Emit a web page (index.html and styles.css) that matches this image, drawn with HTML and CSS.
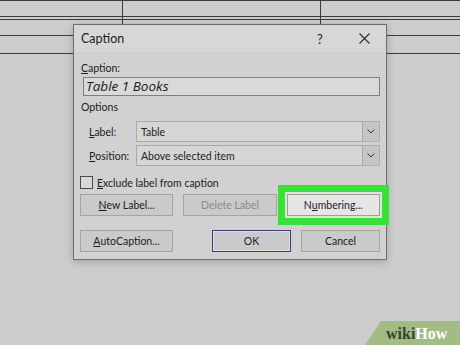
FILE: index.html
```html
<!DOCTYPE html>
<html lang="en">
<head>
  <meta charset="UTF-8">
  <meta name="viewport" content="width=device-width, initial-scale=1">
  <title>Caption</title>
  <link rel="stylesheet" href="styles.css">
</head>
<body>

<div class="page">
  <div class="sheet">
    <div class="trow r1"><div class="cell"></div><div class="cell"></div><div class="cell"></div></div>
    <div class="trow r2"><div class="cell"></div><div class="cell"></div><div class="cell"></div></div>
    <div class="trow r3"><div class="cell"></div><div class="cell"></div><div class="cell"></div></div>
    <div class="trow r4"><div class="cell"></div><div class="cell"></div><div class="cell"></div></div>
  </div>

  <div class="dialog">
    <div class="titlebar">
      <span class="title">Caption</span>
      <span class="help">?</span>
      <span class="close">
        <svg width="11" height="11" viewBox="0 0 11 11"><path d="M0.5 0.5 L10.5 10.5 M10.5 0.5 L0.5 10.5" stroke="#2b2b2b" stroke-width="1.1" fill="none"/></svg>
      </span>
    </div>

    <div class="body">
      <div class="field-label"><u>C</u>aption:</div>
      <div class="caption-input">Table 1 Books</div>

      <div class="group-label">Options</div>

      <div class="opt-row first">
        <span class="opt-label"><u>L</u>abel:</span>
        <div class="select">
          <span class="select-value">Table</span>
          <span class="select-arrow"><svg width="8" height="5" viewBox="0 0 8 5"><path d="M0.5 0.5 L4 4 L7.5 0.5" stroke="#333" stroke-width="1" fill="none"/></svg></span>
        </div>
      </div>
      <div class="opt-row">
        <span class="opt-label"><u>P</u>osition:</span>
        <div class="select">
          <span class="select-value">Above selected item</span>
          <span class="select-arrow"><svg width="8" height="5" viewBox="0 0 8 5"><path d="M0.5 0.5 L4 4 L7.5 0.5" stroke="#333" stroke-width="1" fill="none"/></svg></span>
        </div>
      </div>

      <div class="check-row">
        <span class="check"></span>
        <span><u>E</u>xclude label from caption</span>
      </div>

      <div class="btn-grid">
        <div class="btn"><u>N</u>ew Label...</div>
        <div class="btn disabled">Delete Label</div>
        <div class="btn highlight">N<u>u</u>mbering...</div>
      </div>

      <div class="btn-row">
        <div class="btn auto"><u>A</u>utoCaption...</div>
        <div class="btn small ok">OK</div>
        <div class="btn small">Cancel</div>
      </div>
    </div>
  </div>

  <div class="wikihow"><span class="wiki">wiki</span><span class="how">How</span></div>
</div>

</body>
</html>
```

FILE: styles.css
```css
body {
  margin: 0;
  font-family: Lato, "Open Sans", sans-serif;
  background-color: #cdcdcd;
  color: #1c1c1c;
}
.page {
  position: relative;
  width: 460px;
  height: 345px;
  overflow: hidden;
}
.sheet {
  border-top: 1px solid #3c3c3c;
}
.trow {
  display: grid;
  grid-template-columns: 123px 198px 1fr;
  border-bottom: 1px solid #3c3c3c;
}
.trow .cell {
  border-right: 1px solid #3c3c3c;
}
.trow .cell:last-child {
  border-right: none;
}
.r1 { height: 15px; }
.r2 { height: 2px; }
.r3 { height: 15px; }
.r4 { height: 17px; }

.dialog {
  position: absolute;
  left: 73px;
  top: 24px;
  width: 314px;
  box-sizing: border-box;
  border: 1px solid #6e6e6e;
  background-color: #d1d1d1;
  box-shadow: 0 2px 8px rgba(0,0,0,0.22);
}
.titlebar {
  height: 27px;
  display: flex;
  align-items: center;
  padding-left: 7px;
  background-color: #d7d7d7;
  font-size: 12.5px;
}
.title {
  flex: 1;
}
.help {
  width: 30px;
  margin-right: 7px;
  text-align: center;
  font-size: 13px;
}
.close {
  width: 44px;
  display: flex;
  justify-content: center;
  align-items: center;
}
.body {
  padding: 0 6px 7px 6px;
  font-size: 10.5px;
}
.field-label {
  margin: 9px 0 0 1px;
  line-height: 14px;
}
.caption-input {
  margin: 2px 0 0 3px;
  height: 19px;
  box-sizing: border-box;
  border: 1px solid #7f7f7f;
  background-color: #d9d9d9;
  font-family: "Open Sans", sans-serif;
  font-style: italic;
  font-size: 13.5px;
  line-height: 17px;
  padding-left: 2px;
}
.group-label {
  margin: 4px 0 0 1px;
  line-height: 14px;
}
.opt-row {
  display: flex;
  align-items: stretch;
  height: 21px;
  margin-top: 3px;
}
.opt-row.first {
  margin-top: 7px;
}
.opt-label {
  width: 56px;
  padding-left: 9px;
  box-sizing: border-box;
  display: flex;
  align-items: center;
}
.select {
  flex: 1;
  display: flex;
}
.select-value {
  flex: 1;
  display: flex;
  align-items: center;
  padding-left: 4px;
  border: 1px solid #a8a8a8;
  background-color: #d6d6d6;
}
.select-arrow {
  width: 16px;
  display: flex;
  justify-content: center;
  align-items: center;
  border: 1px solid #b0b0b0;
  border-left: none;
  background-color: #c5c5c5;
}
.check-row {
  display: flex;
  align-items: center;
  height: 13px;
  margin-top: 10px;
}
.check {
  width: 13px;
  height: 13px;
  box-sizing: border-box;
  border: 1px solid #4c4c4c;
  background-color: #d9d9d9;
  margin-right: 4px;
}
.btn-grid {
  display: grid;
  grid-template-columns: 1fr 1fr 1fr;
  gap: 10px;
  margin-top: 5px;
}
.btn {
  height: 22px;
  box-sizing: border-box;
  border: 1px solid #a4a4a4;
  background-color: #cacaca;
  display: flex;
  justify-content: center;
  align-items: center;
}
.btn.disabled {
  color: #8a8a8a;
}
.btn.highlight {
  background-color: #e6e6e6;
  border-color: #9d9d9d;
  box-shadow: 0 0 0 2px #d9e9d5, 0 0 0 9px #38e038;
}
.btn-row {
  display: flex;
  gap: 10px;
  margin-top: 14px;
}
.btn.auto {
  width: 93px;
  margin-right: auto;
}
.btn.small {
  width: 79px;
}
.btn.ok {
  border: 1px solid #3d3d78;
  box-shadow: inset 0 0 0 1px #dcdce4;
  background-color: #c9c9ce;
}

.wikihow {
  position: absolute;
  right: 0;
  bottom: 0;
  width: 95px;
  height: 24px;
  box-sizing: border-box;
  padding-left: 21px;
  background-color: #a3bc86;
  clip-path: polygon(16px 0, 100% 0, 100% 100%, 0 100%);
  font-family: "Liberation Serif", serif;
  font-weight: bold;
  font-size: 16px;
  line-height: 25px;
}
.wiki {
  color: #34432a;
}
.how {
  color: #ffffff;
}
```
